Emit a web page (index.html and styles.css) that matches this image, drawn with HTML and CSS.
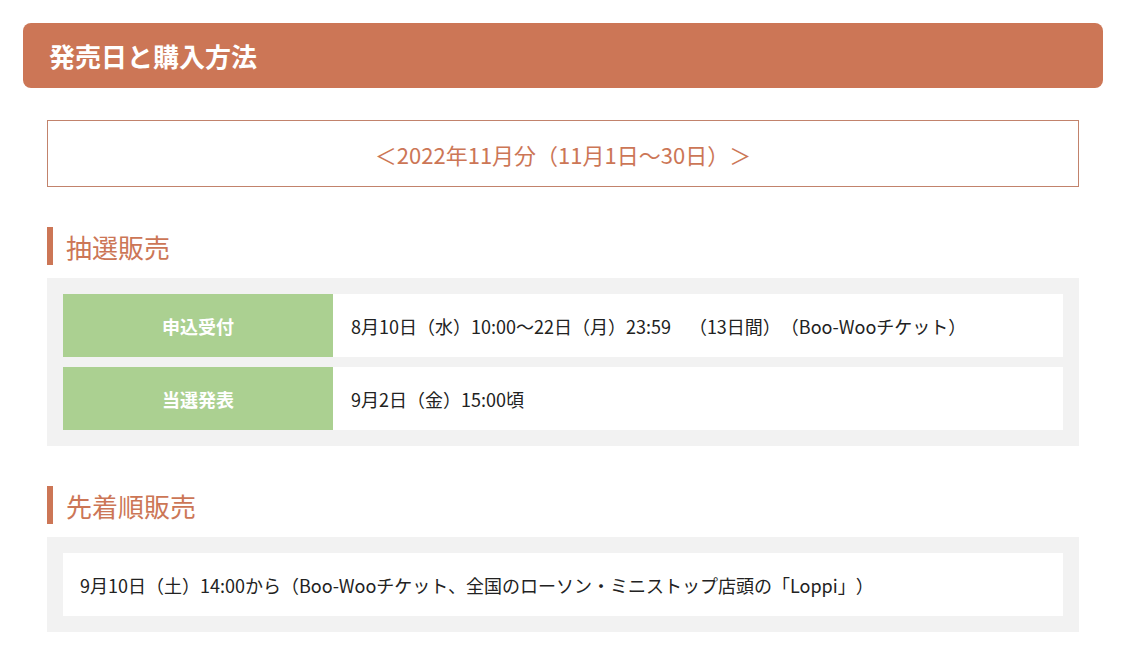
FILE: index.html
```html
<!DOCTYPE html>
<html lang="ja">
<head>
    <meta charset="UTF-8">
    <meta name="viewport" content="width=device-width, initial-scale=1.0">
    <title>発売日と購入方法</title>
    <link rel="stylesheet" href="styles.css">
</head>
<body>
    <section class="section">
        <h2 class="section-title">発売日と購入方法</h2>

        <div class="content">
            <div class="period">＜2022年11月分（11月1日～30日）＞</div>

            <h3 class="sub-title">抽選販売</h3>
            <div class="panel">
                <div class="row">
                    <div class="label">申込受付</div>
                    <div class="value">8月10日（水）10:00～22日（月）23:59　（13日間）（Boo-Wooチケット）</div>
                </div>
                <div class="row">
                    <div class="label">当選発表</div>
                    <div class="value">9月2日（金）15:00頃</div>
                </div>
            </div>

            <h3 class="sub-title">先着順販売</h3>
            <div class="panel">
                <div class="note">9月10日（土）14:00から（Boo-Wooチケット、全国のローソン・ミニストップ店頭の「Loppi」）</div>
            </div>
        </div>
    </section>
</body>
</html>
```

FILE: styles.css
```css
body {
    font-family: "Noto Sans CJK JP", "Noto Sans", sans-serif;
    margin: 0;
    padding: 23px 23px 0;
    background-color: #fff;
    color: #222;
    text-spacing-trim: space-all;
}
.section-title {
    margin: 0;
    height: 65px;
    padding: 0 26px;
    display: flex;
    align-items: center;
    background-color: #cc7656;
    color: #fff;
    border-radius: 8px;
    font-size: 26px;
    font-weight: bold;
}
.content {
    padding: 32px 24px 0;
}
.period {
    height: 65px;
    border: 1px solid #c2836c;
    display: flex;
    align-items: center;
    justify-content: center;
    color: #cc7656;
    font-size: 22px;
}
.sub-title {
    margin: 40px 0 13px;
    height: 38px;
    padding-left: 13px;
    border-left: 6px solid #cc7656;
    display: flex;
    align-items: center;
    color: #cc7656;
    font-size: 26px;
    font-weight: normal;
}
.panel {
    background-color: #f2f2f2;
    padding: 16px;
    display: flex;
    flex-direction: column;
    gap: 10px;
}
.row {
    display: flex;
    height: 63px;
}
.label {
    width: 270px;
    flex-shrink: 0;
    background-color: #abd091;
    color: #fff;
    font-size: 18px;
    font-weight: bold;
    display: flex;
    align-items: center;
    justify-content: center;
}
.value {
    flex: 1;
    background-color: #fff;
    padding: 0 18px;
    display: flex;
    align-items: center;
    font-size: 18px;
}
.note {
    height: 63px;
    background-color: #fff;
    padding: 0 17px;
    display: flex;
    align-items: center;
    font-size: 18px;
}
```
